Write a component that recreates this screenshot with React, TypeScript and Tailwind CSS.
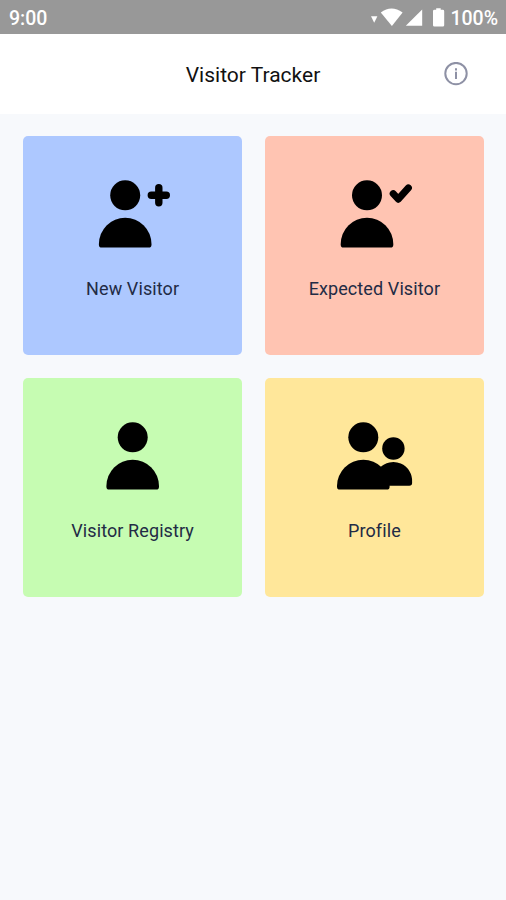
import React from 'react';

// ── Icons ─────────────────────────────────────────────────────────────────────

const Person: React.FC<{ cx: number }> = ({ cx }) => (
  <g transform={`translate(${cx} 0)`}>
    <circle cx="0" cy="20.3" r="15" />
    <path d="M-26.3 69A26.3 26.3 0 0 1 26.3 69V69.7Q26.3 72.6 23.4 72.6H-23.4Q-26.3 72.6 -26.3 69.7Z" />
  </g>
);

const TileIcon: React.FC<{ children: React.ReactNode }> = ({ children }) => (
  <svg className="h-20 w-24 fill-black" viewBox="0 0 96 80">
    {children}
  </svg>
);

const NewVisitorIcon = () => (
  <TileIcon>
    <Person cx={40.2} />
    <path d="M66.3 20.3H81.3M73.8 12.8V27.8" stroke="black" strokeWidth="7.4" strokeLinecap="round" />
  </TileIcon>
);

const ExpectedVisitorIcon = () => (
  <TileIcon>
    <Person cx={41} />
    <path
      d="M67.2 18.6L72.3 24.2L82.4 12.9"
      fill="none"
      stroke="black"
      strokeWidth="7"
      strokeLinecap="round"
      strokeLinejoin="round"
    />
  </TileIcon>
);

const RegistryIcon = () => (
  <TileIcon>
    <Person cx={47.7} />
  </TileIcon>
);

const ProfileIcon = () => (
  <TileIcon>
    <Person cx={37.3} />
    <circle cx="67.4" cy="31.5" r="11.2" />
    <path d="M53.6 51A18.8 18.8 0 0 1 86.1 65V66Q86.1 68.8 83.3 68.8H58.6Z" />
  </TileIcon>
);

// ── Tiles ─────────────────────────────────────────────────────────────────────

const tiles = [
  { label: 'New Visitor', color: 'bg-[#adc8ff]', Icon: NewVisitorIcon },
  { label: 'Expected Visitor', color: 'bg-[#ffc4b2]', Icon: ExpectedVisitorIcon },
  { label: 'Visitor Registry', color: 'bg-[#c6fcb2]', Icon: RegistryIcon },
  { label: 'Profile', color: 'bg-[#ffe79a]', Icon: ProfileIcon },
];

const StatusBar = () => (
  <div className="flex h-[34px] items-center justify-between bg-[#989898] pr-2 pl-[9px] text-[19.5px] leading-[34px] font-medium text-white">
    <span className="pt-[3px]">9:00</span>
    <div className="flex items-center">
      <svg className="h-[34px] w-[79px] fill-white" viewBox="0 0 79 34">
        <path d="M0 16.2H6.4L3.2 22.8Z" />
        <path d="M9.8 12.6Q20.4 4.2 31.6 12.6L20.9 26Z" />
        <path d="M51.2 9.5V25.8H34.8Z" />
        <path d="M65.2 8.2H69.7V9.8H71.8Q73.2 9.8 73.2 11.2V25.2Q73.2 26.6 71.8 26.6H63.4Q62 26.6 62 25.2V11.2Q62 9.8 63.4 9.8H65.2Z" />
      </svg>
      <span className="pt-[3px]">100%</span>
    </div>
  </div>
);

const Header = () => (
  <header className="grid h-[79.5px] grid-cols-[1fr_auto_1fr] items-center bg-white px-[38px]">
    <h1 className="col-start-2 pt-[3px] text-[21px] text-[#111111]">Visitor Tracker</h1>
    <button className="justify-self-end">
      <svg className="size-6" viewBox="0 0 24 24" fill="none" stroke="#8e91a5" strokeWidth="2">
        <circle cx="12" cy="11.6" r="10.7" />
        <path d="M12 9.8V17.1M12 6.2V8.4" />
      </svg>
    </button>
  </header>
);

const App: React.FC = () => (
  <div className="min-h-[900px] bg-[#f7f9fc] font-['Roboto',sans-serif]">
    <StatusBar />
    <Header />
    <main className="grid grid-cols-2 gap-[22.5px] pt-[22px] pr-[22px] pl-[23px]">
      {tiles.map(({ label, color, Icon }) => (
        <div key={label} className={`flex h-[219.5px] flex-col items-center rounded-[5px] pt-[39.5px] ${color}`}>
          <Icon />
          <span className="mt-5 text-lg tracking-[0.1px] text-[#222b45]">{label}</span>
        </div>
      ))}
    </main>
  </div>
);

export default App;
